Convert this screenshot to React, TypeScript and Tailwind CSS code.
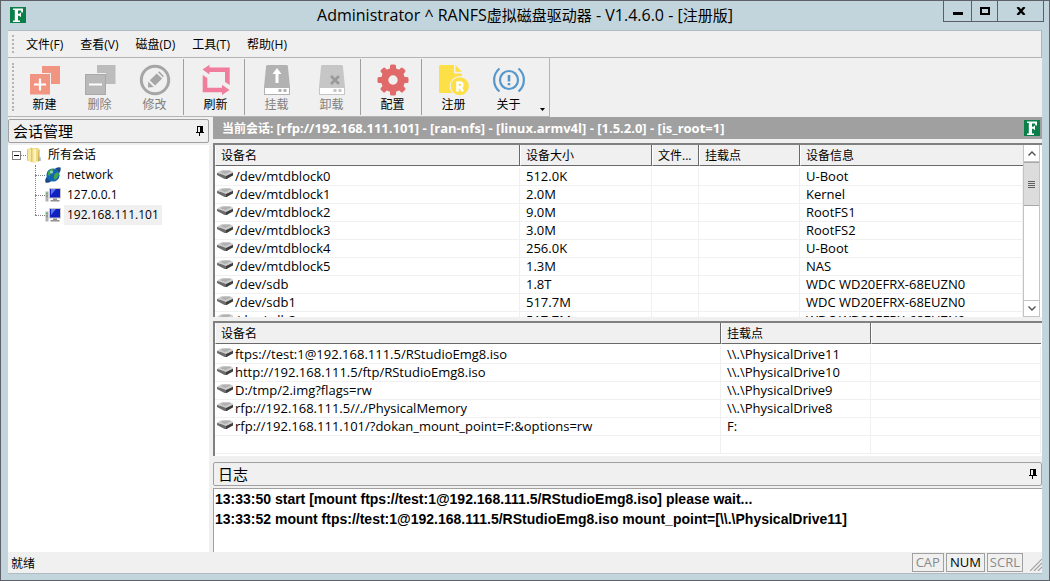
import type { ReactNode } from "react";
import clsx from "clsx";

type Column = { title: string; width?: string };

const menus = ["文件(F)", "查看(V)", "磁盘(D)", "工具(T)", "帮助(H)"];

const deviceColumns: Column[] = [
  { title: "设备名", width: "w-[305px]" },
  { title: "设备大小", width: "w-[132px]" },
  { title: "文件...", width: "w-[47px]" },
  { title: "挂载点", width: "w-[101px]" },
  { title: "设备信息" },
];

const devices = [
  ["/dev/mtdblock0", "512.0K", "", "", "U-Boot"],
  ["/dev/mtdblock1", "2.0M", "", "", "Kernel"],
  ["/dev/mtdblock2", "9.0M", "", "", "RootFS1"],
  ["/dev/mtdblock3", "3.0M", "", "", "RootFS2"],
  ["/dev/mtdblock4", "256.0K", "", "", "U-Boot"],
  ["/dev/mtdblock5", "1.3M", "", "", "NAS"],
  ["/dev/sdb", "1.8T", "", "", "WDC WD20EFRX-68EUZN0"],
  ["/dev/sdb1", "517.7M", "", "", "WDC WD20EFRX-68EUZN0"],
  ["/dev/sdb2", "517.7M", "", "", "WDC WD20EFRX-68EUZN0"],
];

const mountColumns: Column[] = [
  { title: "设备名", width: "w-[506px]" },
  { title: "挂载点", width: "w-[150px]" },
  { title: "" },
];

const mounts = [
  ["ftps://test:1@192.168.111.5/RStudioEmg8.iso", "\\\\.\\PhysicalDrive11", ""],
  ["http://192.168.111.5/ftp/RStudioEmg8.iso", "\\\\.\\PhysicalDrive10", ""],
  ["D:/tmp/2.img?flags=rw", "\\\\.\\PhysicalDrive9", ""],
  ["rfp://192.168.111.5//./PhysicalMemory", "\\\\.\\PhysicalDrive8", ""],
  ["rfp://192.168.111.101/?dokan_mount_point=F:&options=rw", "F:", ""],
  ["", "", ""],
];

const logs = [
  "13:33:50 start [mount ftps://test:1@192.168.111.5/RStudioEmg8.iso] please wait...",
  "13:33:52 mount ftps://test:1@192.168.111.5/RStudioEmg8.iso mount_point=[\\\\.\\PhysicalDrive11]",
];

function AppLogo() {
  return (
    <svg viewBox="0 0 16 16" className="h-4 w-4 shrink-0">
      <rect width="16" height="16" fill="#0b7f47" />
      <path
        d="M3 1.5h10v4h-1.5L11 3.5H8v3.3h1.5l.5-1h1v4h-1l-.5-1H8v4.7h2V15H3v-1.500h1.800V3H3z"
        fill="#fff"
      />
    </svg>
  );
}

function NewIcon() {
  return (
    <svg viewBox="0 0 32 32" className="h-8 w-8">
      <path d="M13 2h18v18h-9V9h-9z" fill="#f29482" />
      <rect x="1" y="10" width="20" height="20.5" fill="#f29482" />
      <path d="M11 14.5v12M5 20.5h12" stroke="#fff" strokeWidth="2.2" />
    </svg>
  );
}

function DeleteIcon() {
  return (
    <svg viewBox="0 0 32 32" className="h-8 w-8">
      <path d="M13 1h18.5v19H22V9h-9z" fill="#bcbcbc" />
      <rect x="1.5" y="10.5" width="20" height="20" fill="#b9b9b9" stroke="#a9a9a9" />
      <path d="M5 20.5h13" stroke="#fff" strokeWidth="2" />
    </svg>
  );
}

function EditIcon() {
  return (
    <svg viewBox="0 0 32 32" className="h-8 w-8">
      <circle cx="16" cy="16" r="13.7" fill="none" stroke="#a6a6a6" strokeWidth="3" />
      <path d="m9.2 17.6 5.6 5.4-5.8.6z" fill="#a6a6a6" />
      <path d="m10.8 16.2 7-6.8 5.3 5.2-7 6.9z" fill="#a6a6a6" />
      <path d="m19 8.3 1.2-1 4.7 4.6-1 1.4z" fill="#a6a6a6" />
    </svg>
  );
}

function RefreshIcon() {
  return (
    <svg viewBox="0 0 32 32" className="h-8 w-8" fill="#f07d9c">
      <path d="M2.5 5.6 9.5.7v2.8h20.2V21L25 18V8H9.5v2.500z" />
      <path d="M29.5 26 22 31v-2.800H2.700V11l4.600 3v9.700H22v-2.900z" />
    </svg>
  );
}

function DiskIcon({ action }: { action: "mount" | "unmount" }) {
  const fill = action === "mount" ? "#b2b2b2" : "#c6c6c6";
  return (
    <svg viewBox="0 0 32 32" className="h-8 w-8">
      <path d="M6.6 1h18.8q1.3 0 1.5 1.3L29 23H3L5.1 2.3Q5.3 1 6.6 1z" fill={fill} />
      <rect x="3.5" y="23.5" width="25" height="7" fill="#fff" stroke={fill} />
      <path d="M17.5 25h3v3h-3zM22.5 25h3v3h-3z" fill={fill} />
      {action === "mount" ? (
        <path d="m16 4 4.500 6h-3v9h-3v-9h-3z" fill="#fff" />
      ) : (
        <path d="m15 12 8 8m0-8-8 8" stroke="#999" strokeWidth="2.6" />
      )}
    </svg>
  );
}

function GearIcon() {
  return (
    <svg viewBox="0 0 32 32" className="h-8 w-8">
      <g fill="#e06a69">
        <circle cx="16" cy="16" r="12" />
        {[0, 45, 90, 135].map((angle) => (
          <rect key={angle} x="13" y="0.5" width="6" height="31" rx="1.5" transform={`rotate(${angle} 16 16)`} />
        ))}
      </g>
      <circle cx="16" cy="16" r="4.7" fill="#f0f0f0" />
    </svg>
  );
}

function RegisterIcon() {
  return (
    <svg viewBox="0 0 32 32" className="h-8 w-8">
      <path d="M2.5 1H16v8.5h7.8V29H2.5Q1 29 1 27.500v-25Q1 1 2.500 1z" fill="#fddf47" />
      <path d="m17.5 1 6.300 6.800h-6.300z" fill="#fddf47" />
      <circle cx="21.8" cy="22.2" r="10.2" fill="#f0f0f0" />
      <circle cx="21.8" cy="22.2" r="9" fill="#fddf47" />
      <path
        d="M19.500 27.500v-9h2.500a2.300 2.300 0 0 1 0 4.700h-2.500m2.800 0 2.500 4.300"
        fill="none"
        stroke="#fff"
        strokeWidth="2.6"
      />
    </svg>
  );
}

function AboutIcon() {
  return (
    <svg viewBox="0 0 32 32" className="h-8 w-8" fill="none" stroke="#5698cb" strokeWidth="2.2">
      <circle cx="16" cy="16" r="9" />
      <path d="M6.500 4.500a15 15 0 0 0 0 23M25.500 4.500a15 15 0 0 1 0 23" />
      <path d="M16 11v6.500M16 19v2.200" strokeWidth="2.6" />
    </svg>
  );
}

function PinIcon() {
  return (
    <svg viewBox="0 0 8 10" className="h-[10px] w-2" shapeRendering="crispEdges">
      <path d="M1 0h6v6h1v1H4v3H3V7H0V6h1zM2 1v5h2V1z" fill="#000" fillRule="evenodd" />
    </svg>
  );
}

function DriveIcon() {
  return (
    <svg viewBox="0 0 16 12" className="mt-px h-3 w-4 shrink-0">
      <path d="M0 4 8 5l8-2v3.200L9.500 10h-2L0 6z" fill="#6d6d6d" />
      <path d="M9 6.500 16 3.300v3L9.500 10H9z" fill="#3d3d3d" />
      <path d="M0 3.500 5 1h8l3 1.700v1L9 7z" fill="#cfcfcf" />
      <path d="m3 3 4-1.300h5l2 .8-6 2.700z" fill="#b2b2b2" />
    </svg>
  );
}

function FolderIcon() {
  return (
    <svg viewBox="0 0 16 16" className="h-4 w-4">
      <path d="M1 2.500 6 .5v14.500L1 13.500z" fill="#e3c65f" />
      <path d="M2 2.500 5 1.500v13l-3-1z" fill="#f7e79d" />
      <path d="M6 1h6.500v13L8 15.800 6 15z" fill="#efd981" />
      <path d="M7.500 2H10v12.500l-2.500.8z" fill="#fdf5c4" />
      <path d="M12.500 2.500h1v11.500l-1.500.5z" fill="#c9a640" />
      <path d="M13.500 10.500h1V14h-1z" fill="#4f9fd8" />
    </svg>
  );
}

function GlobeIcon() {
  return (
    <svg viewBox="0 0 16 16" className="h-4 w-4">
      <path d="M.5 15.500Q-.5 12.500 2 9.500l4 5q-3 2-5.500 1zM10 1.500q4-2 5.500-1 .8 2-1 5.500z" fill="#1c4a86" />
      <circle cx="8" cy="8" r="6.6" fill="#1464b4" />
      <path d="M3 5q2.500-3.500 6-3.300l-1 2.800-2 1L5 9 2.500 8z" fill="#3fa64a" />
      <path d="m9.500 7 3-2 1.500 2-1.500 4-3 2-.8-3z" fill="#3fa64a" />
      <circle cx="6.5" cy="5" r="1.6" fill="#8fd6c0" />
    </svg>
  );
}

function ComputerIcon() {
  return (
    <svg viewBox="0 0 16 16" className="h-4 w-4">
      <path d="M.5 4.500h3v10h-3z" fill="#b0b0b0" />
      <path d="M1 6.500h2" stroke="#3cc43c" />
      <path d="M1 9h2" stroke="#7a7a7a" />
      <rect x="4" y="1" width="12" height="10.5" fill="#c7c7c7" />
      <rect x="5" y="2" width="10" height="8.5" fill="#1020c0" />
      <path d="M6 2h5l-5 6z" fill="#5c79ee" />
      <path d="M8 11.500h4V13h2.500v1.500h-9V13H8z" fill="#909090" />
    </svg>
  );
}

function ToolButton({ label, disabled, children }: { label: string; disabled?: boolean; children: ReactNode }) {
  return (
    <button
      disabled={disabled}
      className="flex w-[55px] flex-col items-center self-start pt-[5px] text-black disabled:text-[#7f7f7f]"
    >
      {children}
      <span className="mt-px text-xs leading-4">{label}</span>
    </button>
  );
}

function Divider() {
  return <div className="mr-1 ml-px w-px self-stretch bg-[#a0a0a0]" />;
}

function Grip() {
  return <div className="my-1 mr-[3px] ml-1 w-0 self-stretch border-l-2 border-dotted border-[#b4b4b4]" />;
}

function PaneHeader({ title }: { title: string }) {
  return (
    <div className="flex h-6 shrink-0 items-center justify-between rounded-xs border border-[#a0a0a0] px-1">
      <h2 className="text-[15px] leading-5">{title}</h2>
      <button aria-label={`固定${title}`}>
        <PinIcon />
      </button>
    </div>
  );
}

function ListView({ label, columns, rows }: { label: string; columns: Column[]; rows: string[][] }) {
  return (
    <table aria-label={label} className="w-full table-fixed border-separate border-spacing-0">
      <thead>
        <tr>
          {columns.map((column, i) => (
            <th key={i} className={clsx("p-0 pb-0.5 text-left font-normal", column.width)}>
              <div
                className={clsx(
                  "flex h-[21px] items-center border-b border-l border-b-[#696969] border-l-white bg-[#f0f0f0] pt-0.5 pl-[5px] text-xs whitespace-nowrap",
                  i < columns.length - 1 && "border-r border-r-[#696969]",
                )}
              >
                {column.title}
              </div>
            </th>
          ))}
        </tr>
      </thead>
      <tbody>
        {rows.map((row, r) => (
          <tr key={r}>
            {row.map((cell, i) => (
              <td
                key={i}
                className={clsx(
                  "h-[18px] border-r border-b border-[#f0f0f0] p-0 text-[13px] leading-[17px] whitespace-nowrap",
                  i > 0 && "pl-1.5",
                )}
              >
                {i === 0 ? (
                  <div className="flex items-start gap-0.5 pl-0.5">
                    {cell && <DriveIcon />}
                    {cell}
                  </div>
                ) : (
                  cell
                )}
              </td>
            ))}
          </tr>
        ))}
      </tbody>
    </table>
  );
}

function ScrollBar() {
  return (
    <div className="flex w-[17px] shrink-0 flex-col border-x border-[#c4c4c4] bg-white">
      <button aria-label="向上滚动" className="flex h-[17px] items-center justify-center border-b border-[#c4c4c4]">
        <svg viewBox="0 0 8 5" className="h-[5px] w-2" fill="none" stroke="#505050" strokeWidth="1.4">
          <path d="m.5 4.500 3.500-3.500 3.500 3.500" />
        </svg>
      </button>
      <div className="flex h-11 flex-col items-center justify-center gap-px border-y border-[#a8a8a8] bg-[#dcdcdc]">
        {[0, 1, 2, 3].map((line) => (
          <span key={line} className="h-px w-[7px] bg-[#606060]" />
        ))}
      </div>
      <div className="flex-1" />
      <button aria-label="向下滚动" className="flex h-[17px] items-center justify-center border-y border-[#c4c4c4]">
        <svg viewBox="0 0 8 5" className="h-[5px] w-2" fill="none" stroke="#505050" strokeWidth="1.4">
          <path d="m.5.5 3.500 3.500 3.500-3.500" />
        </svg>
      </button>
    </div>
  );
}

function TreeItem({ label, selected, children }: { label: string; selected?: boolean; children: ReactNode }) {
  return (
    <li className="flex h-5 items-center">
      <span className="w-2.5 border-t border-dotted border-[#808080]" />
      {children}
      <span className={clsx("ml-[3px] px-[3px] text-xs leading-5", selected && "bg-[#f0f0f0]")}>{label}</span>
    </li>
  );
}

function SessionTree() {
  return (
    <div className="mt-0.5 flex-1 bg-white">
      <div className="flex h-5 items-center pl-1">
        <button
          aria-label="折叠"
          className="flex h-[9px] w-[9px] items-center justify-center border border-[#808080]"
        >
          <span className="h-px w-[5px] bg-black" />
        </button>
        <span className="w-[5px] border-t border-dotted border-[#808080]" />
        <FolderIcon />
        <span className="ml-1.5 text-xs">所有会话</span>
      </div>
      <div className="relative ml-[27px]">
        <div className="absolute top-0 left-0 h-[50px] border-l border-dotted border-[#808080]" />
        <ul>
          <TreeItem label="network">
            <GlobeIcon />
          </TreeItem>
          <TreeItem label="127.0.0.1">
            <ComputerIcon />
          </TreeItem>
          <TreeItem label="192.168.111.101" selected>
            <ComputerIcon />
          </TreeItem>
        </ul>
      </div>
    </div>
  );
}

function TitleBar() {
  return (
    <header className="flex h-[29px] shrink-0 items-start">
      <div className="w-[106px] pt-[6px] pl-[9px]">
        <AppLogo />
      </div>
      <h1 className="flex-1 truncate pt-[3px] text-center text-base leading-[22px]">
        Administrator ^ RANFS<span className="text-[15px]">虚拟磁盘驱动器</span> - V1.4.6.0 - [
        <span className="text-[15px]">注册版</span>]
      </h1>
      <div className="mr-[5px] flex h-[21px] border border-t-0 border-[#5c5e66]">
        <button aria-label="最小化" className="flex w-7 items-center justify-center border-r border-[#5c5e66]">
          <span className="mt-1 h-[3px] w-[10px] bg-black" />
        </button>
        <button aria-label="最大化" className="flex w-[26px] items-center justify-center border-r border-[#5c5e66]">
          <span className="h-2 w-[10px] border-2 border-black" />
        </button>
        <button aria-label="关闭" className="flex w-[45px] items-center justify-center">
          <svg viewBox="0 0 10 8" className="h-2 w-[10px]" stroke="#000" strokeWidth="2.4">
            <path d="m1.500 0 7 8m0-8-7 8" />
          </svg>
        </button>
      </div>
    </header>
  );
}

function ToolBar() {
  return (
    <div className="flex shrink-0">
      <div className="flex items-center border-r border-b border-[#b4b4b4] py-px">
        <Grip />
        <ToolButton label="新建">
          <NewIcon />
        </ToolButton>
        <ToolButton label="删除" disabled>
          <DeleteIcon />
        </ToolButton>
        <ToolButton label="修改" disabled>
          <EditIcon />
        </ToolButton>
        <Divider />
        <ToolButton label="刷新">
          <RefreshIcon />
        </ToolButton>
        <Divider />
        <ToolButton label="挂载" disabled>
          <DiskIcon action="mount" />
        </ToolButton>
        <ToolButton label="卸载" disabled>
          <DiskIcon action="unmount" />
        </ToolButton>
        <Divider />
        <ToolButton label="配置">
          <GearIcon />
        </ToolButton>
        <Divider />
        <ToolButton label="注册">
          <RegisterIcon />
        </ToolButton>
        <ToolButton label="关于">
          <AboutIcon />
        </ToolButton>
        <button aria-label="更多" className="flex h-14 w-[13px] items-end justify-center pb-1">
          <svg viewBox="0 0 5 3" className="h-[3px] w-[5px]">
            <path d="M0 0h5L2.500 3z" />
          </svg>
        </button>
      </div>
    </div>
  );
}

export default function App() {
  return (
    <div className="flex h-screen flex-col border border-[#5f6169] bg-[#c3d5dc] font-['Open_Sans','Noto_Sans_CJK_SC',sans-serif] text-xs text-black">
      <TitleBar />
      <div className="mr-[7px] mb-1.5 ml-[7px] flex min-h-0 flex-1 flex-col border-y border-[#b0bcc2] bg-[#f0f0f0]">
        <nav className="flex h-[27px] shrink-0 items-center border-r border-b border-[#b4b4b4]">
          <Grip />
          <div className="ml-[9px] flex gap-[17px] pt-0.5">
            {menus.map((menu) => (
              <button key={menu} className="text-xs leading-5">
                {menu}
              </button>
            ))}
          </div>
        </nav>
        <ToolBar />
        <div className="flex min-h-0 flex-1 gap-1">
          <aside className="flex w-[201px] shrink-0 flex-col pt-0.5">
            <PaneHeader title="会话管理" />
            <SessionTree />
          </aside>
          <main className="flex min-w-0 flex-1 flex-col">
            <div className="flex h-[22px] shrink-0 items-center justify-between bg-[#a0a0a0] pr-0.5 pl-[9px] text-white">
              <p className="text-[13px] leading-5 font-bold whitespace-nowrap">
                <span className="text-xs">当前会话: </span>
                [rfp://192.168.111.101] - [ran-nfs] - [linux.armv4l] - [1.5.2.0] - [is_root=1]
              </p>
              <AppLogo />
            </div>
            <section className="mt-1 flex min-h-0 flex-[175] border-t-2 border-l-2 border-[#808080] bg-white pr-0.5">
              <div className="min-w-0 flex-1 overflow-hidden">
                <ListView label="设备" columns={deviceColumns} rows={devices} />
              </div>
              <ScrollBar />
            </section>
            <section className="mt-1 min-h-0 flex-[135] overflow-hidden border-t-2 border-l-2 border-[#808080] bg-white pr-px">
              <ListView label="挂载" columns={mountColumns} rows={mounts} />
            </section>
            <div className="mt-1.5">
              <PaneHeader title="日志" />
            </div>
            <section className="mt-0.5 min-h-0 flex-[64] overflow-hidden border-t border-l border-[#a0a0a0] bg-white pl-px font-['Liberation_Sans',sans-serif] text-sm leading-5 font-bold">
              {logs.map((line) => (
                <p key={line}>{line}</p>
              ))}
            </section>
          </main>
        </div>
        <footer className="flex h-[21px] shrink-0 items-center">
          <span className="flex-1 pt-0.5 pl-[3px]">就绪</span>
          <div className="flex items-center gap-0.5 text-[13px] leading-[17px] text-[#8a8a8a]">
            <span className="border border-[#a0a0a0] px-[3px]">CAP</span>
            <span className="border border-[#a0a0a0] px-[3px] text-black">NUM</span>
            <span className="border border-[#a0a0a0] px-0.5">SCRL</span>
          </div>
          <svg viewBox="0 0 12 12" className="mt-1 ml-[7px] h-3 w-3" stroke="#a0a0a0" strokeWidth="1.2">
            <path d="M0 12 12 0M4 12l8-8M8 12l4-4" />
          </svg>
        </footer>
      </div>
    </div>
  );
}
